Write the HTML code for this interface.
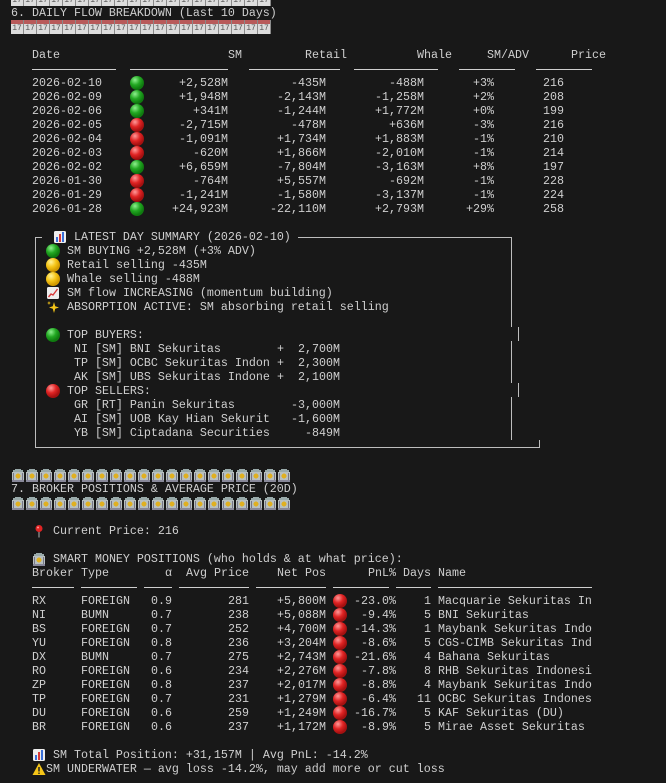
<!DOCTYPE html>
<html><head><meta charset="utf-8">
<style>
html,body{margin:0;padding:0}
body{background:#181818;width:666px;height:783px;overflow:hidden;position:relative}
#t{position:absolute;left:4px;top:-8px;font:11.67px/14px "Liberation Mono","DejaVu Sans Mono",monospace;color:#cfcfcf}
#t div{white-space:pre;height:14px}
i{font-style:normal;display:inline-block;vertical-align:top;height:14px;text-align:right;white-space:pre}
i.L{text-align:left}
.e{width:14px;height:14px;position:relative;border-radius:50%}
.e svg{position:absolute;left:0;top:0;width:14px;height:14px}
.p{border-radius:0}
.g{background:radial-gradient(circle at 5px 4px,#8ef08e 0,#22a822 5px,#0f7a0f 9px)}
.r{background:radial-gradient(circle at 5px 4px,#ff9a9a 0,#e02424 5px,#a51010 9px)}
.y{background:radial-gradient(circle at 5px 4px,#fff49a 0,#f5c518 5px,#d29a00 9px)}
.d{background:linear-gradient(#cfcfcf,#cfcfcf) 0 7px/100% 1px no-repeat}
.cal{display:inline-block;width:13px;height:14px;vertical-align:top;border-right:1px solid #8a8a8a;background:linear-gradient(#b85a5a 0,#b85a5a 4px,#dcdcdc 4px);font-size:8px;line-height:10px;padding-top:4px;box-sizing:border-box;text-align:center;color:#555}
.bk{display:inline-block;width:14px;height:14px;vertical-align:top;background:
 radial-gradient(circle at 7px 8px,#e0b020 0,#e0b020 2.3px,transparent 2.6px),
 linear-gradient(90deg,transparent 2px,#778 2px,#778 3px,transparent 3px,transparent 11px,#778 11px,#778 12px,transparent 12px) 0 5px/14px 7px no-repeat,
 linear-gradient(#b8c0c0,#b8c0c0) 1px 4px/12px 8px no-repeat,
 linear-gradient(#9aa,#9aa) 2px 2px/10px 2px no-repeat,
 linear-gradient(#9aa,#9aa) 4px 1px/6px 1px no-repeat,
 linear-gradient(#889,#889) 1px 12px/12px 2px no-repeat}
.ln{position:absolute;background:#bdbdbd}
</style></head><body>
<div id="t">
<div> <span class="cal">17</span><span class="cal">17</span><span class="cal">17</span><span class="cal">17</span><span class="cal">17</span><span class="cal">17</span><span class="cal">17</span><span class="cal">17</span><span class="cal">17</span><span class="cal">17</span><span class="cal">17</span><span class="cal">17</span><span class="cal">17</span><span class="cal">17</span><span class="cal">17</span><span class="cal">17</span><span class="cal">17</span><span class="cal">17</span><span class="cal">17</span><span class="cal">17</span></div>
<div> 6. DAILY FLOW BREAKDOWN (Last 10 Days)</div>
<div> <span class="cal">17</span><span class="cal">17</span><span class="cal">17</span><span class="cal">17</span><span class="cal">17</span><span class="cal">17</span><span class="cal">17</span><span class="cal">17</span><span class="cal">17</span><span class="cal">17</span><span class="cal">17</span><span class="cal">17</span><span class="cal">17</span><span class="cal">17</span><span class="cal">17</span><span class="cal">17</span><span class="cal">17</span><span class="cal">17</span><span class="cal">17</span><span class="cal">17</span></div>
<div></div>
<div>    <i class="L" style="width:140px">Date</i><i style="width:70px">SM</i><i style="width:105px">Retail</i><i style="width:105px">Whale</i><i style="width:77px">SM/ADV</i><i style="width:77px">Price</i></div>
<div>    <i class="d" style="width:84px"></i><i style="width:14px"></i><i class="d" style="width:98px"></i><i style="width:21px"></i><i class="d" style="width:91px"></i><i style="width:14px"></i><i class="d" style="width:84px"></i><i style="width:21px"></i><i class="d" style="width:56px"></i><i style="width:21px"></i><i class="d" style="width:56px"></i></div>
<div>    <i class="L" style="width:98px">2026-02-10</i><i class="e g"></i><i style="width:84px">+2,528M</i><i style="width:98px">-435M</i><i style="width:98px">-488M</i><i style="width:70px">+3%</i><i style="width:49px"></i>216</div>
<div>    <i class="L" style="width:98px">2026-02-09</i><i class="e g"></i><i style="width:84px">+1,948M</i><i style="width:98px">-2,143M</i><i style="width:98px">-1,258M</i><i style="width:70px">+2%</i><i style="width:49px"></i>208</div>
<div>    <i class="L" style="width:98px">2026-02-06</i><i class="e g"></i><i style="width:84px">+341M</i><i style="width:98px">-1,244M</i><i style="width:98px">+1,772M</i><i style="width:70px">+0%</i><i style="width:49px"></i>199</div>
<div>    <i class="L" style="width:98px">2026-02-05</i><i class="e r"></i><i style="width:84px">-2,715M</i><i style="width:98px">-478M</i><i style="width:98px">+636M</i><i style="width:70px">-3%</i><i style="width:49px"></i>216</div>
<div>    <i class="L" style="width:98px">2026-02-04</i><i class="e r"></i><i style="width:84px">-1,091M</i><i style="width:98px">+1,734M</i><i style="width:98px">+1,883M</i><i style="width:70px">-1%</i><i style="width:49px"></i>210</div>
<div>    <i class="L" style="width:98px">2026-02-03</i><i class="e r"></i><i style="width:84px">-620M</i><i style="width:98px">+1,866M</i><i style="width:98px">-2,010M</i><i style="width:70px">-1%</i><i style="width:49px"></i>214</div>
<div>    <i class="L" style="width:98px">2026-02-02</i><i class="e g"></i><i style="width:84px">+6,659M</i><i style="width:98px">-7,804M</i><i style="width:98px">-3,163M</i><i style="width:70px">+8%</i><i style="width:49px"></i>197</div>
<div>    <i class="L" style="width:98px">2026-01-30</i><i class="e r"></i><i style="width:84px">-764M</i><i style="width:98px">+5,557M</i><i style="width:98px">-692M</i><i style="width:70px">-1%</i><i style="width:49px"></i>228</div>
<div>    <i class="L" style="width:98px">2026-01-29</i><i class="e r"></i><i style="width:84px">-1,241M</i><i style="width:98px">-1,580M</i><i style="width:98px">-3,137M</i><i style="width:70px">-1%</i><i style="width:49px"></i>224</div>
<div>    <i class="L" style="width:98px">2026-01-28</i><i class="e g"></i><i style="width:84px">+24,923M</i><i style="width:98px">-22,110M</i><i style="width:98px">+2,793M</i><i style="width:70px">+29%</i><i style="width:49px"></i>258</div>
<div></div>
<div>       <i class="e p"><svg viewBox="0 0 14 14"><rect x="1" y="1" width="12" height="12" rx="1.5" fill="#eee"/><rect x="3" y="7" width="2" height="5" fill="#3a6fd8"/><rect x="6" y="4" width="2" height="8" fill="#d83a3a"/><rect x="9" y="2" width="2" height="10" fill="#3a6fd8"/></svg></i> LATEST DAY SUMMARY (2026-02-10)</div>
<div>      <i class="e g"></i> SM BUYING +2,528M (+3% ADV)</div>
<div>      <i class="e y"></i> Retail selling -435M</div>
<div>      <i class="e y"></i> Whale selling -488M</div>
<div>      <i class="e p"><svg viewBox="0 0 14 14"><rect x="1" y="1" width="12" height="12" rx="1.5" fill="#eee"/><path d="M2.5 11 L5 8 L7 9 L11.5 3" stroke="#d83a3a" stroke-width="1.4" fill="none"/></svg></i> SM flow INCREASING (momentum building)</div>
<div>      <i class="e p"><svg viewBox="0 0 14 14"><path d="M8 2 L9.2 6.3 L13 7.5 L9.2 8.7 L8 13 L6.8 8.7 L3 7.5 L6.8 6.3 Z" fill="#f5c518"/><path d="M3 1 L3.6 2.6 L5 3 L3.6 3.4 L3 5 L2.4 3.4 L1 3 L2.4 2.6Z" fill="#f5c518"/></svg></i> ABSORPTION ACTIVE: SM absorbing retail selling</div>
<div></div>
<div>      <i class="e g"></i> TOP BUYERS:</div>
<div>          <i class="L" style="width:203px">NI [SM] BNI Sekuritas</i><i class="L" style="width:7px">+</i><i style="width:56px">2,700M</i></div>
<div>          <i class="L" style="width:203px">TP [SM] OCBC Sekuritas Indon</i><i class="L" style="width:7px">+</i><i style="width:56px">2,300M</i></div>
<div>          <i class="L" style="width:203px">AK [SM] UBS Sekuritas Indone</i><i class="L" style="width:7px">+</i><i style="width:56px">2,100M</i></div>
<div>      <i class="e r"></i> TOP SELLERS:</div>
<div>          <i class="L" style="width:203px">GR [RT] Panin Sekuritas</i><i style="width:7px"></i><i style="width:56px">-3,000M</i></div>
<div>          <i class="L" style="width:203px">AI [SM] UOB Kay Hian Sekurit</i><i style="width:7px"></i><i style="width:56px">-1,600M</i></div>
<div>          <i class="L" style="width:203px">YB [SM] Ciptadana Securities</i><i style="width:7px"></i><i style="width:56px">-849M</i></div>
<div></div>
<div></div>
<div> <span class="bk"></span><span class="bk"></span><span class="bk"></span><span class="bk"></span><span class="bk"></span><span class="bk"></span><span class="bk"></span><span class="bk"></span><span class="bk"></span><span class="bk"></span><span class="bk"></span><span class="bk"></span><span class="bk"></span><span class="bk"></span><span class="bk"></span><span class="bk"></span><span class="bk"></span><span class="bk"></span><span class="bk"></span><span class="bk"></span></div>
<div> 7. BROKER POSITIONS &amp; AVERAGE PRICE (20D)</div>
<div> <span class="bk"></span><span class="bk"></span><span class="bk"></span><span class="bk"></span><span class="bk"></span><span class="bk"></span><span class="bk"></span><span class="bk"></span><span class="bk"></span><span class="bk"></span><span class="bk"></span><span class="bk"></span><span class="bk"></span><span class="bk"></span><span class="bk"></span><span class="bk"></span><span class="bk"></span><span class="bk"></span><span class="bk"></span><span class="bk"></span></div>
<div></div>
<div>    <i class="e p"><svg viewBox="0 0 14 14"><circle cx="7" cy="4.5" r="3.5" fill="#e02424"/><circle cx="6" cy="3.5" r="1" fill="#ff9a9a"/><path d="M7 8 L7 13.5" stroke="#999" stroke-width="1.2"/></svg></i> Current Price: 216</div>
<div></div>
<div>    <span class="bk"></span> SMART MONEY POSITIONS (who holds &amp; at what price):</div>
<div>    <i class="L" style="width:49px">Broker</i><i class="L" style="width:84px">Type</i><i class="L" style="width:21px">α</i><i class="L" style="width:63px">Avg Price</i><i style="width:77px">Net Pos</i><i style="width:70px">PnL%</i><i style="width:7px"></i><i class="L" style="width:35px">Days</i>Name</div>
<div>    <i class="d" style="width:42px"></i><i style="width:7px"></i><i class="d" style="width:56px"></i><i style="width:7px"></i><i class="d" style="width:28px"></i><i style="width:7px"></i><i class="d" style="width:70px"></i><i style="width:7px"></i><i class="d" style="width:70px"></i><i style="width:7px"></i><i class="d" style="width:56px"></i><i style="width:7px"></i><i class="d" style="width:35px"></i><i style="width:7px"></i><i class="d" style="width:154px"></i></div>
<div>    <i class="L" style="width:49px">RX</i><i class="L" style="width:70px">FOREIGN</i><i class="L" style="width:21px">0.9</i><i style="width:77px">281</i><i style="width:77px">+5,800M</i><i style="width:7px"></i><i class="e r"></i><i style="width:49px">-23.0%</i><i style="width:35px">1</i> Macquarie Sekuritas In</div>
<div>    <i class="L" style="width:49px">NI</i><i class="L" style="width:70px">BUMN</i><i class="L" style="width:21px">0.7</i><i style="width:77px">238</i><i style="width:77px">+5,088M</i><i style="width:7px"></i><i class="e r"></i><i style="width:49px">-9.4%</i><i style="width:35px">5</i> BNI Sekuritas</div>
<div>    <i class="L" style="width:49px">BS</i><i class="L" style="width:70px">FOREIGN</i><i class="L" style="width:21px">0.7</i><i style="width:77px">252</i><i style="width:77px">+4,700M</i><i style="width:7px"></i><i class="e r"></i><i style="width:49px">-14.3%</i><i style="width:35px">1</i> Maybank Sekuritas Indo</div>
<div>    <i class="L" style="width:49px">YU</i><i class="L" style="width:70px">FOREIGN</i><i class="L" style="width:21px">0.8</i><i style="width:77px">236</i><i style="width:77px">+3,204M</i><i style="width:7px"></i><i class="e r"></i><i style="width:49px">-8.6%</i><i style="width:35px">5</i> CGS-CIMB Sekuritas Ind</div>
<div>    <i class="L" style="width:49px">DX</i><i class="L" style="width:70px">BUMN</i><i class="L" style="width:21px">0.7</i><i style="width:77px">275</i><i style="width:77px">+2,743M</i><i style="width:7px"></i><i class="e r"></i><i style="width:49px">-21.6%</i><i style="width:35px">4</i> Bahana Sekuritas</div>
<div>    <i class="L" style="width:49px">RO</i><i class="L" style="width:70px">FOREIGN</i><i class="L" style="width:21px">0.6</i><i style="width:77px">234</i><i style="width:77px">+2,276M</i><i style="width:7px"></i><i class="e r"></i><i style="width:49px">-7.8%</i><i style="width:35px">8</i> RHB Sekuritas Indonesi</div>
<div>    <i class="L" style="width:49px">ZP</i><i class="L" style="width:70px">FOREIGN</i><i class="L" style="width:21px">0.8</i><i style="width:77px">237</i><i style="width:77px">+2,017M</i><i style="width:7px"></i><i class="e r"></i><i style="width:49px">-8.8%</i><i style="width:35px">4</i> Maybank Sekuritas Indo</div>
<div>    <i class="L" style="width:49px">TP</i><i class="L" style="width:70px">FOREIGN</i><i class="L" style="width:21px">0.7</i><i style="width:77px">231</i><i style="width:77px">+1,279M</i><i style="width:7px"></i><i class="e r"></i><i style="width:49px">-6.4%</i><i style="width:35px">11</i> OCBC Sekuritas Indones</div>
<div>    <i class="L" style="width:49px">DU</i><i class="L" style="width:70px">FOREIGN</i><i class="L" style="width:21px">0.6</i><i style="width:77px">259</i><i style="width:77px">+1,249M</i><i style="width:7px"></i><i class="e r"></i><i style="width:49px">-16.7%</i><i style="width:35px">5</i> KAF Sekuritas (DU)</div>
<div>    <i class="L" style="width:49px">BR</i><i class="L" style="width:70px">FOREIGN</i><i class="L" style="width:21px">0.6</i><i style="width:77px">237</i><i style="width:77px">+1,172M</i><i style="width:7px"></i><i class="e r"></i><i style="width:49px">-8.9%</i><i style="width:35px">5</i> Mirae Asset Sekuritas</div>
<div></div>
<div>    <i class="e p"><svg viewBox="0 0 14 14"><rect x="1" y="1" width="12" height="12" rx="1.5" fill="#eee"/><rect x="3" y="7" width="2" height="5" fill="#3a6fd8"/><rect x="6" y="4" width="2" height="8" fill="#d83a3a"/><rect x="9" y="2" width="2" height="10" fill="#3a6fd8"/></svg></i> SM Total Position: +31,157M | Avg PnL: -14.2%</div>
<div>    <i class="e p"><svg viewBox="0 0 14 14"><path d="M7 1 L13.5 13 L0.5 13Z" fill="#f5c518"/><path d="M7 5v4.5" stroke="#222" stroke-width="1.5"/><circle cx="7" cy="11.2" r=".8" fill="#222"/></svg></i>SM UNDERWATER — avg loss -14.2%, may add more or cut loss</div>
</div>
<div class="ln" style="left:35px;top:237px;width:7px;height:1px"></div>
<div class="ln" style="left:298px;top:237px;width:214px;height:1px"></div>
<div class="ln" style="left:35px;top:237px;width:1px;height:211px"></div>
<div class="ln" style="left:35px;top:447px;width:505px;height:1px"></div>
<div class="ln" style="left:539px;top:440px;width:1px;height:8px"></div>
<div class="ln" style="left:511px;top:237px;width:1px;height:90px"></div>
<div class="ln" style="left:518px;top:327px;width:1px;height:14px"></div>
<div class="ln" style="left:511px;top:341px;width:1px;height:42px"></div>
<div class="ln" style="left:518px;top:383px;width:1px;height:14px"></div>
<div class="ln" style="left:511px;top:397px;width:1px;height:43px"></div>
</body></html>
